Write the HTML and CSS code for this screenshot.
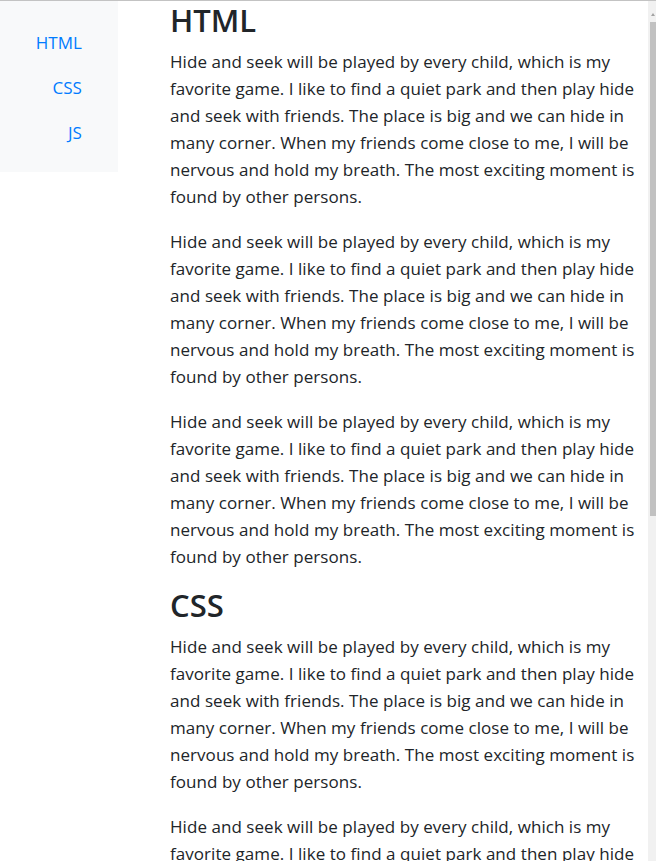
FILE: index.html
```html
<!DOCTYPE html>
<html lang="en">
<head>
    <meta charset="UTF-8">
    <meta name="viewport" content="width=device-width, initial-scale=1.0">
    <title>Scrollspy</title>
    <link rel="stylesheet" href="styles.css">
</head>
<body>

    <div class="page">
        <nav class="sidebar">
            <a href="#html">HTML</a>
            <a href="#css">CSS</a>
            <a href="#js">JS</a>
        </nav>

        <main class="content">
            <h2 id="html">HTML</h2>
            <p>Hide and seek will be played by every child, which is my favorite game. I like to find a quiet park and then play hide and seek with friends. The place is big and we can hide in many corner. When my friends come close to me, I will be nervous and hold my breath. The most exciting moment is found by other persons.</p>
            <p>Hide and seek will be played by every child, which is my favorite game. I like to find a quiet park and then play hide and seek with friends. The place is big and we can hide in many corner. When my friends come close to me, I will be nervous and hold my breath. The most exciting moment is found by other persons.</p>
            <p>Hide and seek will be played by every child, which is my favorite game. I like to find a quiet park and then play hide and seek with friends. The place is big and we can hide in many corner. When my friends come close to me, I will be nervous and hold my breath. The most exciting moment is found by other persons.</p>

            <h2 id="css">CSS</h2>
            <p>Hide and seek will be played by every child, which is my favorite game. I like to find a quiet park and then play hide and seek with friends. The place is big and we can hide in many corner. When my friends come close to me, I will be nervous and hold my breath. The most exciting moment is found by other persons.</p>
            <p>Hide and seek will be played by every child, which is my favorite game. I like to find a quiet park and then play hide and seek with friends. The place is big and we can hide in many corner. When my friends come close to me, I will be nervous and hold my breath. The most exciting moment is found by other persons.</p>
            <p>Hide and seek will be played by every child, which is my favorite game. I like to find a quiet park and then play hide and seek with friends. The place is big and we can hide in many corner. When my friends come close to me, I will be nervous and hold my breath. The most exciting moment is found by other persons.</p>

            <h2 id="js">JS</h2>
            <p>Hide and seek will be played by every child, which is my favorite game. I like to find a quiet park and then play hide and seek with friends. The place is big and we can hide in many corner. When my friends come close to me, I will be nervous and hold my breath. The most exciting moment is found by other persons.</p>
        </main>
    </div>

    <!-- fake scrollbar, the real one is hidden -->
    <div class="scrollbar">
        <span class="scroll-arrow"></span>
        <span class="scroll-thumb"></span>
    </div>

</body>
</html>
```
FILE: styles.css
```css
/* General Styles */
html, body {
    overflow: hidden;
}

body {
    margin: 0;
    border-top: 1px solid #c3c3c3;
    font-family: "Open Sans", "Noto Sans", sans-serif;
    font-size: 17px;
    line-height: 27px;
    letter-spacing: 0.05px;
    color: #212529;
    background: #fff;
}

.page {
    display: flex;
    align-items: flex-start;
}

/* Sidebar */
.sidebar {
    flex: 0 0 118px;
    background-color: #f8f9fa;
    padding: 19px 0 17px;
    text-align: right;
}

.sidebar a {
    display: block;
    padding: 9px 36px 9px 0;
    color: #007bff;
    text-decoration: none;
}

/* Main content */
.content {
    width: 472px;
    margin-left: 52px;
    padding-top: 2px;
}

.content h2 {
    margin: 0 0 11px;
    font-size: 31px;
    line-height: 34px;
    font-weight: 600;
    letter-spacing: 0;
}

.content p {
    margin: 0 0 18px;
}

/* Scrollbar */
.scrollbar {
    position: fixed;
    top: 1px;
    right: 0;
    width: 8px;
    height: 100%;
    background: #f1f1f1;
}

.scroll-arrow {
    position: absolute;
    top: 12px;
    left: 3px;
    border-left: 2px solid transparent;
    border-right: 2px solid transparent;
    border-bottom: 3px solid #a3a3a3;
}

.scroll-thumb {
    position: absolute;
    top: 21px;
    left: 2px;
    width: 6px;
    height: 494px;
    background: #c1c1c1;
}
```
